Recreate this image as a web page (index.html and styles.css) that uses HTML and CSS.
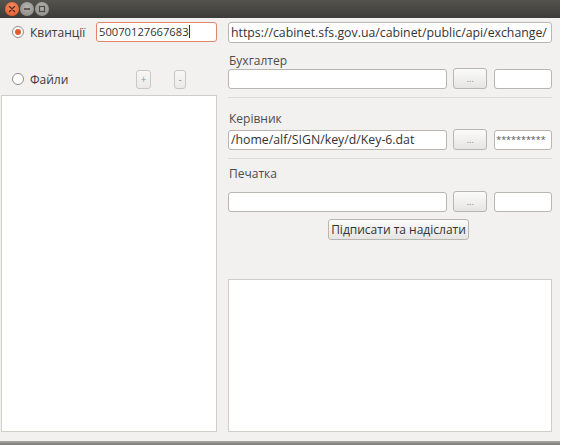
FILE: index.html
```html
<!DOCTYPE html>
<html>
<head>
<meta charset="utf-8">
<link rel="stylesheet" href="styles.css">
</head>
<body>
<div class="window">
  <div class="titlebar">
    <span class="wbtn close"><svg width="8" height="8" viewBox="0 0 8 8"><path d="M1.5 1.5L6.5 6.5M6.5 1.5L1.5 6.5" stroke="#5a2a18" stroke-width="1.4" stroke-linecap="round"/></svg></span>
    <span class="wbtn"><svg width="8" height="8" viewBox="0 0 8 8"><path d="M1 4H7" stroke="#4a4945" stroke-width="1.6"/></svg></span>
    <span class="wbtn"><svg width="8" height="8" viewBox="0 0 8 8"><rect x="1.5" y="1.5" width="5" height="5" fill="none" stroke="#4a4945" stroke-width="1.2"/></svg></span>
  </div>
  <div class="content">
    <div class="left">
      <div class="lrow1">
        <label class="radio"><span class="rdot checked"></span><span class="rtext">Квитанції</span></label>
        <div class="input focus">50070127667683<span class="caret"></span></div>
      </div>
      <div class="lrow2">
        <label class="radio"><span class="rdot"></span><span class="rtext">Файли</span></label>
        <span class="sbtn plus">+</span>
        <span class="sbtn minus">-</span>
      </div>
      <div class="list"></div>
    </div>
    <div class="right">
      <div class="input url">https://cabinet.sfs.gov.ua/cabinet/public/api/exchange/</div>
      <div class="label l1">Бухгалтер</div>
      <div class="row r1">
        <div class="input path"></div>
        <span class="btn dots">...</span>
        <div class="input pass"></div>
      </div>
      <div class="sep s1"></div>
      <div class="label l2">Керівник</div>
      <div class="row r2">
        <div class="input path">/home/alf/SIGN/key/d/Key-6.dat</div>
        <span class="btn dots">...</span>
        <div class="input pass stars">**********</div>
      </div>
      <div class="sep s2"></div>
      <div class="label l3">Печатка</div>
      <div class="row r3">
        <div class="input path"></div>
        <span class="btn dots">...</span>
        <div class="input pass"></div>
      </div>
      <span class="btn send">Підписати та надіслати</span>
      <div class="log"></div>
    </div>
  </div>
</div>
<div class="shadow"></div>
</body>
</html>
```
FILE: styles.css
```css
html, body {
  margin: 0;
  padding: 0;
  background: #ffffff;
}
body {
  width: 568px;
  height: 445px;
  overflow: hidden;
  font-family: "Open Sans", "Noto Sans", sans-serif;
  font-size: 11px;
  color: #3c3c3c;
}
.window {
  width: 560px;
  height: 441px;
  background: #f2f1f0;
  display: flex;
  flex-direction: column;
}
.shadow {
  width: 560px;
  height: 4px;
  background: linear-gradient(#a8a7a4, #7a7976);
}
.titlebar {
  height: 18px;
  background: linear-gradient(#55534e, #3c3b37);
  display: flex;
  align-items: center;
  gap: 1px;
  padding-left: 5px;
  box-sizing: border-box;
}
.wbtn {
  width: 14px;
  height: 14px;
  border-radius: 50%;
  background: radial-gradient(circle at 50% 35%, #b5b4af, #85847f);
  display: flex;
  align-items: center;
  justify-content: center;
}
.wbtn.close {
  background: radial-gradient(circle at 50% 35%, #f59066, #df5222);
}
.content {
  flex: 1;
  display: flex;
  padding: 4px 8px 9px 1px;
  box-sizing: border-box;
}
.left {
  width: 216px;
  display: flex;
  flex-direction: column;
}
.right {
  margin-left: 11px;
  width: 324px;
  display: flex;
  flex-direction: column;
}
.lrow1 {
  height: 20px;
  display: flex;
  align-items: center;
}
.lrow2 {
  margin-top: 27px;
  height: 20px;
  display: flex;
  align-items: center;
}
.radio {
  display: flex;
  align-items: center;
  width: 95px;
  padding-left: 11px;
  box-sizing: border-box;
}
.rdot {
  width: 12px;
  height: 12px;
  border: 1px solid #8e8c87;
  border-radius: 50%;
  background: #fff;
  display: flex;
  align-items: center;
  justify-content: center;
  box-sizing: border-box;
}
.rdot.checked::after {
  content: "";
  width: 6px;
  height: 6px;
  border-radius: 50%;
  background: #e05a2a;
}
.rtext {
  margin-left: 6px;
  font-size: 12px;
  color: #3c3c3c;
}
.input {
  box-sizing: border-box;
  height: 20px;
  background: #fff;
  border: 1px solid #b8b6b1;
  border-radius: 3px;
  padding: 0 2px;
  line-height: 18px;
  color: #333;
  white-space: nowrap;
  overflow: hidden;
  font-size: 12.3px;
}
.input.focus {
  width: 121px;
  border-color: #e0876a;
  font-size: 11.2px;
}
.caret {
  display: inline-block;
  width: 1px;
  height: 13px;
  background: #333;
  vertical-align: -2px;
}
.sbtn {
  box-sizing: border-box;
  height: 19px;
  border: 1px solid #c9c7c2;
  border-radius: 3px;
  background: linear-gradient(#f7f7f6, #ebeae8);
  color: #9a9893;
  font-size: 10px;
  line-height: 17px;
  text-align: center;
}
.sbtn.plus {
  width: 15px;
  margin-left: 40px;
}
.sbtn.minus {
  width: 12px;
  margin-left: 23px;
}
.list {
  margin-top: 6px;
  flex: 1;
  background: #fff;
  border: 1px solid #d0cec9;
}
.input.url {
  height: 21px;
  line-height: 19px;
}
.label {
  height: 16px;
  line-height: 16px;
  font-size: 12px;
  color: #4c4c4c;
  padding-left: 1px;
}
.l1 { margin-top: 10px; }
.l2 { margin-top: 13px; }
.l3 { margin-top: 7px; }
.row {
  height: 20px;
  display: flex;
}
.r2 { margin-top: 3px; }
.r3 { margin-top: 10px; }
.row .path {
  width: 220px;
}
.btn {
  box-sizing: border-box;
  border: 1px solid #b8b6b1;
  border-radius: 3px;
  background: linear-gradient(#fbfbfa, #e6e5e3);
  color: #333;
  text-align: center;
}
.dots {
  width: 34px;
  height: 21px;
  margin-left: 6px;
  margin-top: -1px;
  font-size: 9px;
  line-height: 20px;
  color: #8a8884;
}
.row .pass {
  width: 58px;
  margin-left: 7px;
}
.input.stars {
  font-size: 9px;
  color: #555;
  padding: 0 1px;
}
.sep {
  height: 1px;
  background: #dedcd8;
  margin-top: 8px;
}
.send {
  align-self: flex-start;
  margin-left: 100px;
  margin-top: 7px;
  height: 21px;
  width: 141px;
  font-size: 12px;
  line-height: 19px;
}
.log {
  margin-top: 39px;
  flex: 1;
  background: #fff;
  border: 1px solid #d0cec9;
}
```
